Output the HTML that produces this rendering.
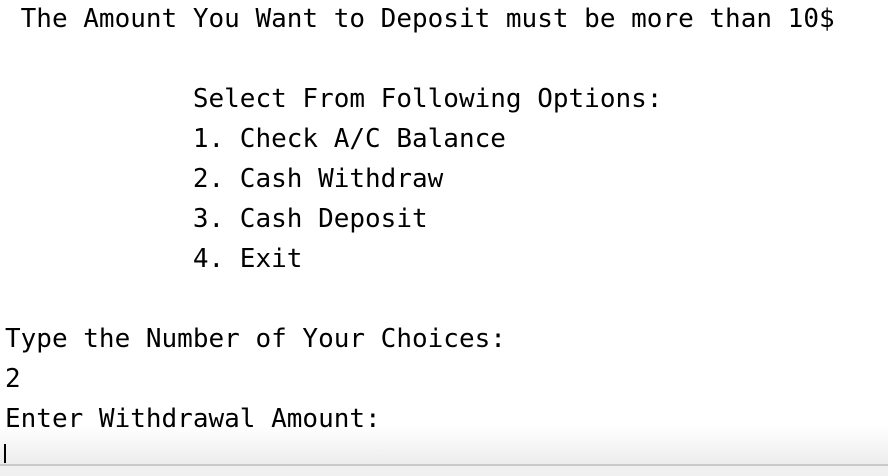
<!DOCTYPE html>
<html><head><meta charset="utf-8"><style>
html,body{margin:0;padding:0;width:888px;height:476px;overflow:hidden;background:#fff;}
pre{position:absolute;left:5px;top:-1px;margin:0;font-family:"DejaVu Sans Mono","Liberation Mono",monospace;font-size:26px;line-height:40px;color:#000;}
.grad{position:absolute;left:0;top:426px;width:888px;height:39px;background:linear-gradient(#fff,#ececec);}
.line{position:absolute;left:0;top:464px;width:888px;height:2px;background:#c9c9c9;}
.bot{position:absolute;left:0;top:466px;width:888px;height:10px;background:#f0f0f0;}
.cur{position:absolute;left:4px;top:444px;width:2px;height:19px;background:#000;}
</style></head><body>
<div class="grad"></div><div class="line"></div><div class="bot"></div><div class="cur"></div>
<pre> The Amount You Want to Deposit must be more than 10$

            Select From Following Options:
            1. Check A/C Balance
            2. Cash Withdraw
            3. Cash Deposit
            4. Exit

Type the Number of Your Choices:
2
Enter Withdrawal Amount:</pre>
</body></html>
